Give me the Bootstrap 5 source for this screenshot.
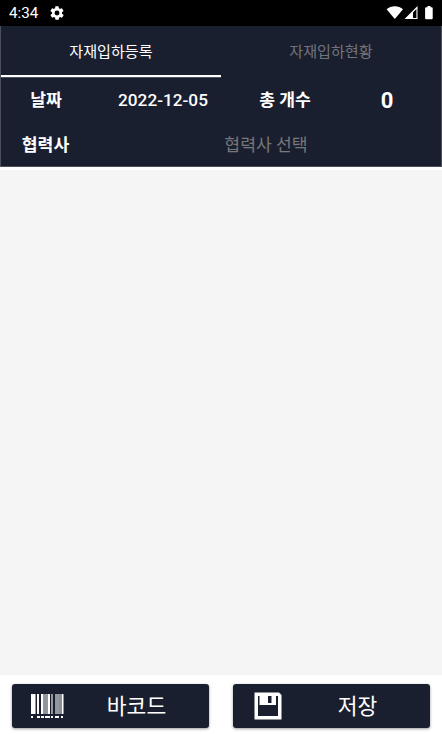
<!DOCTYPE html>
<html lang="ko">
<head>
<meta charset="utf-8">
<meta name="viewport" content="width=device-width, initial-scale=1">
<title>자재입하등록</title>
<link href="https://cdn.jsdelivr.net/npm/bootstrap@5.3.0/dist/css/bootstrap.min.css" rel="stylesheet">
<style>
body{font-family:Roboto,"Noto Sans CJK KR",sans-serif;line-height:1;overflow:hidden}
.status-bar{height:26px;background:#000;font-size:15.2px;padding:0 8px 0 9px}
.clock{padding-top:2px}
.gear{margin-left:11px}
.head-panel{height:141px;background:#1a1f2f;border:solid #4c505b;border-width:0 1px 1px}
.tabs-row{height:51px;font-size:15.1px}
.tab-item{border-radius:0;color:#74757a;border-bottom:2px solid transparent;padding:4px 0 0}
.tab-item.current{color:#fff;border-bottom-color:#fff;box-shadow:0 1px 0 #4c505b}
.info-grid{display:grid;grid-template-columns:90px 144px 100px 1fr;grid-template-rows:46px 44px;font-size:17.2px;font-weight:500}
.info-grid>div{padding-top:2px}
.info-grid .wide{grid-column:2/5;color:#77787b;font-weight:400}
.info-grid .count{font-size:22px;font-weight:700;padding-right:2px;padding-top:2px}
.info-grid .label{font-weight:700}
.info-grid .vendor{padding-right:1px}
.list-area{background:#f5f5f5;margin-top:3px}
.action-bar{height:59px;padding:9px 12px 6px;gap:24px}
.action-btn{height:44px;background:#1a1f2f;color:#fff;border:0;border-radius:3px;font-size:21.5px;padding:0;box-shadow:0 1px 3px rgba(0,0,0,.4);line-height:1}
.action-btn:hover{background:#1a1f2f;color:#fff}
.icon-slot{width:69px;flex:none}
.caption{padding:2px 17px 0 0}
</style>
</head>
<body class="d-flex flex-column vh-100 bg-white">
<div class="status-bar d-flex align-items-center text-white">
  <span class="clock">4:34</span>
  <svg class="gear" width="16" height="16" viewBox="0 0 24 24" fill="#fff"><path d="M19.400 13a7.800 7.800 0 0 0 0-2l2.100-1.700a.5.5 0 0 0 .1-.6l-2-3.500a.5.5 0 0 0-.6-.2l-2.500 1a7.300 7.300 0 0 0-1.700-1L14.400 2.400A.5.5 0 0 0 14 2h-4a.5.5 0 0 0-.5.400L9.100 5a7.700 7.700 0 0 0-1.700 1l-2.500-1a.5.5 0 0 0-.6.200l-2 3.500a.5.5 0 0 0 .1.600L4.600 11a8 8 0 0 0 0 2l-2.100 1.700a.5.5 0 0 0-.1.600l2 3.500c.1.200.4.300.6.200l2.500-1a7.300 7.300 0 0 0 1.700 1l.4 2.600c0 .200.2.400.5.400h4c.2 0 .4-.2.5-.4l.4-2.600a7.300 7.300 0 0 0 1.700-1l2.500 1c.2.100.5 0 .6-.2l2-3.500a.5.5 0 0 0-.1-.6zM12 15.700a3.700 3.700 0 1 1 0-7.400 3.700 3.700 0 0 1 0 7.400z"/></svg>
  <svg class="ms-auto" width="48" height="16" viewBox="0 0 48 16" fill="#fff"><path d="M.6 4.200C5 .3 12.500.3 17 4.200L8.800 14z"/><path fill-rule="evenodd" d="M31.500 1v13h-13zM27 7.500v5.500h3.400v-9z"/><path d="M41.500 1h3v1.200h1.200q1 0 1 1v10q0 1-1 1h-5.600q-1 0-1-1v-10q0-1 1-1h1.400z"/></svg>
</div>
<header class="head-panel">
  <nav class="tabs-row d-flex">
    <a class="tab-item current w-50 d-flex align-items-center justify-content-center text-decoration-none" href="#">자재입하등록</a>
    <a class="tab-item w-50 d-flex align-items-center justify-content-center text-decoration-none" href="#">자재입하현황</a>
  </nav>
  <div class="info-grid text-white text-center align-items-center">
    <div class="label">날짜</div><div>2022-12-05</div><div class="label">총 개수</div><div class="count">0</div>
    <div class="label vendor">협력사</div><div class="wide">협력사 선택</div>
  </div>
</header>
<main class="list-area flex-grow-1"></main>
<footer class="action-bar d-flex">
  <button class="btn action-btn d-flex align-items-center flex-fill w-50">
    <span class="icon-slot d-flex justify-content-center"><svg width="34" height="26" viewBox="0 0 34 26" fill="#fff"><path d="M1 1h4v20H1zM7 1h2v20H7zM11 1h2v20h-2zM14.500 1h1v20h-1zM18 1h2v20h-2zM29.500 1h1v20h-1zM31.500 1h2v20h-2zM1 23h2v2H1zM7 23h3v2H7zM11 23h3v2h-3zM15 23h5v2h-5zM21 23h2v2h-2zM25 23h4v2h-4zM31 23h2v2h-2z"/><path fill="#9297a0" d="M5 1h1v20H5zM13 1h1.500v20H13zM15.500 1H18v20h-2.500zM21 1h2v20h-2zM25 1h4v20h-4z"/></svg></span>
    <span class="caption flex-grow-1">바코드</span>
  </button>
  <button class="btn action-btn d-flex align-items-center flex-fill w-50">
    <span class="icon-slot d-flex justify-content-center"><svg width="28" height="28" viewBox="0 0 28 28" fill="#fff"><path fill-rule="evenodd" d="M.5.5H25L27.500 3v24.500H.5zM4 4v20h20V4h-2v9H5.500V4zM14 4v7h3.500V4z"/></svg></span>
    <span class="caption flex-grow-1">저장</span>
  </button>
</footer>
<script src="https://cdn.jsdelivr.net/npm/bootstrap@5.3.0/dist/js/bootstrap.bundle.min.js"></script>
</body>
</html>
